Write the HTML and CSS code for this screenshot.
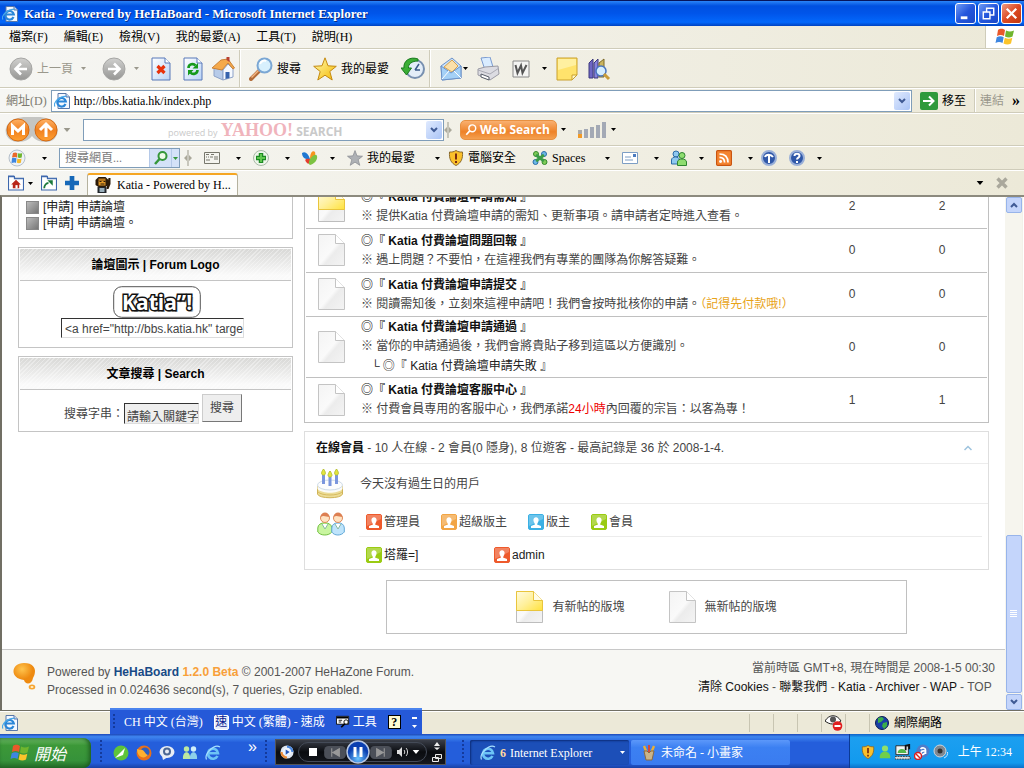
FILE: index.html
```
<!DOCTYPE html>
<html lang="zh-Hant">
<head>
<meta charset="utf-8">
<title>Katia - Powered by HeHaBoard</title>
<link rel="stylesheet" href="styles.css">
</head>
<body>
<svg class="defs" aria-hidden="true">
  <defs>
    <linearGradient id="gGrey" x2="0" y2="1"><stop offset="0" stop-color="#d0d0ce"/><stop offset="1" stop-color="#969694"/></linearGradient>
    <linearGradient id="gOrange" x2="0" y2="1"><stop offset="0" stop-color="#ffb367"/><stop offset=".5" stop-color="#f08020"/><stop offset="1" stop-color="#ffa030"/></linearGradient>
    <linearGradient id="gPage" x2="1" y2="1"><stop offset="0" stop-color="#fff"/><stop offset="1" stop-color="#b9d3f6"/></linearGradient>
    <linearGradient id="gStar" x2="1" y2="1"><stop offset="0" stop-color="#fffbb0"/><stop offset="1" stop-color="#f5b800"/></linearGradient>
    <linearGradient id="gDoc" x2="1" y2="1"><stop offset="0" stop-color="#f4f4f4"/><stop offset=".5" stop-color="#fafafa"/><stop offset=".6" stop-color="#ececec"/><stop offset="1" stop-color="#f4f4f4"/></linearGradient>
    <linearGradient id="gNew" x2="1" y2="1"><stop offset="0" stop-color="#fffbe0"/><stop offset=".5" stop-color="#fff09a"/><stop offset="1" stop-color="#ffe23c"/></linearGradient>
    <radialGradient id="gBlob" cx=".4" cy=".3"><stop offset="0" stop-color="#ffc44d"/><stop offset="1" stop-color="#ee8a10"/></radialGradient>
    <radialGradient id="gPlay" cx=".5" cy=".8"><stop offset="0" stop-color="#6cc6ff"/><stop offset="1" stop-color="#0b3fb0"/></radialGradient>
  </defs>
  <symbol id="arrow" viewBox="0 0 5 3"><path d="M0 0h5L2.500 3z" fill="currentColor"/></symbol>
  <symbol id="ie" viewBox="0 0 16 16"><path d="M4 .5h8l3.500 3.500v11.500H4z" fill="#f4f8ff" stroke="#5877a8"/><path d="M12 .5V4h3.500" fill="#c8d8f2" stroke="#5877a8"/><path d="M11.500 11A4.300 4.300 0 1 1 11.800 8.500H3.500" fill="none" stroke="#2a86d8" stroke-width="2.200"/><path d="M1 13.500C-1.500 10 6 2.500 12.500 3.500" fill="none" stroke="#49a8e8" stroke-width="1.200"/></symbol>
  <symbol id="ieBig" viewBox="0 0 16 16"><path d="M12.500 11A5 5 0 1 1 13 8.300H4" fill="none" stroke="#6cc4f6" stroke-width="2.600"/><path d="M1.500 14.500C-1 9 9-1.500 15 2" fill="none" stroke="#a8e0ff" stroke-width="1.200"/></symbol>
  <symbol id="flag" viewBox="0 0 20 18"><path d="M3 2c3-2 5-1 7 0L9 8C7 7 5 6.500 2 8z" fill="#e9582a"/><path d="M11 2.500c3 1.500 5 1.300 8 0L17.500 8.500c-3 1.500-5 1-7.500 0z" fill="#6fb52e"/><path d="M1.700 9.200c3-1.600 5-1 7 0L7.500 15c-2-1-4-1.500-7 0z" fill="#3e86e0"/><path d="M9.800 9.700c3 1.300 5 1.300 7.500 0L16 15.500c-3 1.500-5 1-7.500 0z" fill="#fbc42b"/></symbol>
  <symbol id="back" viewBox="0 0 24 24"><circle cx="12" cy="12" r="11" fill="url(#gGrey)" stroke="#a6a6a4"/><path d="M18 12H7M12 6.500L6.500 12l5.500 5.500" fill="none" stroke="#fff" stroke-width="2.600"/></symbol>
  <symbol id="fwd" viewBox="0 0 24 24"><circle cx="12" cy="12" r="11" fill="url(#gGrey)" stroke="#a6a6a4"/><path d="M6 12h11M12 6.500l5.500 5.500-5.500 5.500" fill="none" stroke="#fff" stroke-width="2.600"/></symbol>
  <symbol id="stop" viewBox="0 0 20 24"><path d="M1 1h13l5 5v17H1z" fill="url(#gPage)" stroke="#5878b8"/><path d="M14 1v5h5" fill="#fff" stroke="#5878b8"/><path d="M6.500 9l7 7M13.500 9l-7 7" stroke="#e8320c" stroke-width="3.200"/></symbol>
  <symbol id="refresh" viewBox="0 0 20 24"><path d="M1 1h13l5 5v17H1z" fill="url(#gPage)" stroke="#5878b8"/><path d="M14 1v5h5" fill="#fff" stroke="#5878b8"/><path d="M5.500 11c0-4 5-5 7-2.500M14.500 13c0 4-5 5-7 2.500" fill="none" stroke="#159a1c" stroke-width="2.600"/><path d="M15 6v5.500H9.500zM5 18.500V13h5.500z" fill="#159a1c"/></symbol>
  <symbol id="home" viewBox="0 0 24 24"><path d="M3 11v8l9 4V13z" fill="#b7cbe9" stroke="#8da2c8"/><path d="M12 13l5-6 5 5v8l-10 3z" fill="#f5f9ff" stroke="#8da2c8"/><path d="M1 11L10 3l7-1 6.500 9-1.500 1-5-6-6 7z" fill="#f5a94a" stroke="#c98238"/><path d="M14.500 15h4v6l-4 1z" fill="#3763ad"/><path d="M15.500 0h3v5l-3-2z" fill="#b84032"/></symbol>
  <symbol id="lens" viewBox="0 0 24 24"><path d="M10 14L2 22" stroke="#b36c39" stroke-width="4" stroke-linecap="round"/><path d="M9.500 13.500l-7 7" stroke="#f3b684" stroke-width="1.500"/><circle cx="15.500" cy="8.500" r="7" fill="#d8f0fd" stroke="#7ba7d4" stroke-width="2"/><path d="M11 7c1-3 4-4 6-3" fill="none" stroke="#fff" stroke-width="2"/></symbol>
  <symbol id="star" viewBox="0 0 24 24"><path d="M12 .8l3 8 8.300.5-6.500 5.200 2.400 8.500L12 18.200 4.800 23l2.400-8.500L.7 9.300 9 8.800z" fill="url(#gStar)" stroke="#c48a10"/></symbol>
  <symbol id="history" viewBox="0 0 24 24"><circle cx="14" cy="12" r="9" fill="#e3edf8" stroke="#7890b0" stroke-width="2"/><path d="M14 13l4-6M14 13h5" stroke="#385888" stroke-width="1.500"/><path d="M17 2C9-1 2 4 3 11H0l5.500 7 5-7H7.500C7 7 11 4 17 4z" fill="#3bae35" stroke="#1b7a20"/></symbol>
  <symbol id="mail" viewBox="0 0 24 24"><path d="M2 9L13 1l9 8v12L3 23z" fill="#c9e2fb" stroke="#6c92c8"/><path d="M5 10l8-7 6 6-6 6z" fill="#fbe0a9" stroke="#d5a24d"/><path d="M2 9l10 7 10-7v12L3 23z" fill="#a4d0f6" stroke="#6c92c8"/><path d="M3 22l7-8M22 21l-7-7" stroke="#fff"/></symbol>
  <symbol id="printer" viewBox="0 0 24 24"><path d="M5 1l9-1 3 10-8 3z" fill="#d9ecff" stroke="#7b9bd0"/><path d="M2 12l7-2 13-1 1 8-9 6L2 18z" fill="#dcdce2" stroke="#9a9aa4"/><path d="M2 13l12 4 9-6" fill="none" stroke="#aaaab4"/><path d="M5 17l8 3v3l-8-3z" fill="#fff" stroke="#555b67"/></symbol>
  <symbol id="word" viewBox="0 0 18 18"><path d="M1 1h16v16H1z" fill="#f4f4f2" stroke="#888"/><path d="M3.500 5l2 8L9 5.500 10.500 13 14.500 5" fill="none" stroke="#555" stroke-width="2"/></symbol>
  <symbol id="note" viewBox="0 0 22 24"><path d="M1 1h20v17l-5 5H1z" fill="#ffe36c" stroke="#c9a02c"/><path d="M2 2h18v6L2 13z" fill="#fff0a0"/><path d="M16 23v-5h5z" fill="#fff8cc" stroke="#c9a02c"/></symbol>
  <symbol id="books" viewBox="0 0 22 24"><path d="M1 6l4-4v19H1z" fill="#6e66c4" stroke="#3d387d"/><path d="M6 6l4-4v19H6z" fill="#8884de" stroke="#3d387d"/><path d="M11 6l5-4v18h-5z" fill="#cbb55e" stroke="#7a6828"/><circle cx="13" cy="14" r="5" fill="#d4edff" stroke="#4875c0" stroke-width="1.500"/><path d="M16 17l5 5" stroke="#c99b38" stroke-width="3"/></symbol>
  <symbol id="chev" viewBox="0 0 8 6"><path d="M1 1l3 3 3-3" fill="none" stroke="#3f5a94" stroke-width="2"/></symbol>
  <symbol id="go" viewBox="0 0 18 18"><rect width="18" height="18" rx="2" fill="#2f9a3b"/><path d="M3 9h10M9 4.500L13.500 9 9 13.500" fill="none" stroke="#fff" stroke-width="2"/></symbol>
  <symbol id="mws" viewBox="0 0 54 26"><path d="M13 1c8-2 20-2 28 0 16 3 15 24 0 24-7 0-12-3-14-6-2 3-7 6-14 6C-3 25-4 4 13 1z" fill="#c5c5c2"/><circle cx="13" cy="13" r="11" fill="url(#gOrange)" stroke="#d56a12"/><circle cx="41" cy="13" r="11" fill="url(#gOrange)" stroke="#d56a12"/><path d="M7.500 18V9L13 14l5.500-5v9" fill="none" stroke="#fff" stroke-width="3"/><path d="M41 20V8M35 13l6-6 6 6" fill="none" stroke="#fff" stroke-width="3"/></symbol>
  <symbol id="split" viewBox="0 0 8 16"><path d="M4 0v16" stroke="#9b998b"/><path d="M0 8l3-3v6zM8 8L5 5v6z" fill="#aaa89a"/></symbol>
  <symbol id="bars" viewBox="0 0 29 16"><path d="M0 8h4v8H0z" fill="#aaa"/><path d="M0 12h4v4H0z" fill="#f39a26"/><path d="M6 7h4v9H6zM12 5h4v11h-4zM18 3h4v13h-4zM24 0h4v16h-4z" fill="#a3a9b5"/></symbol>
  <symbol id="orb" viewBox="0 0 18 18"><circle cx="9" cy="9" r="8" fill="#edf2f8" stroke="#b5bfca"/><path d="M5 4c2-1 3-.5 4 0v4.500c-2-1-3-.5-5 0z" fill="#e9682a"/><path d="M9.700 4c1.500 1 3.500.6 4.500 0l-.5 4.500c-1.500.7-2.500.5-4 0z" fill="#6fb52e"/><path d="M4 9.300c2-.8 3-.3 4.500 0L8 14c-1.500-.7-2.500-.6-4.500 0z" fill="#3e86e0"/><path d="M9.300 9.500c1.500.8 2.800.6 4.200 0l-.6 4.300c-1.500.7-2.800.5-4 0z" fill="#f4b92b"/></symbol>
  <symbol id="glens" viewBox="0 0 14 14"><circle cx="8.500" cy="5" r="4" fill="#eefbe8" stroke="#35973a" stroke-width="2"/><path d="M5.500 8L1 13" stroke="#35973a" stroke-width="2.500"/></symbol>
  <symbol id="card" viewBox="0 0 16 12"><path d="M.5.500h15v11H.5z" fill="#f4f4ef" stroke="#77776c"/><path d="M2 2.500h3M7 2.500h3M2 5h1M4 5h1M6 5h3M2 8h4M11 4v4M13 4v4" stroke="#77776c"/></symbol>
  <symbol id="plusG" viewBox="0 0 16 16"><circle cx="8" cy="8" r="7.500" fill="#eef5ea" stroke="#a9b8a6"/><path d="M8 3v10M3 8h10" stroke="#1d8a24" stroke-width="4.500"/><path d="M8 4v8M4 8h8" stroke="#60c84e" stroke-width="2"/></symbol>
  <symbol id="butterfly" viewBox="0 0 16 14"><path d="M8 8C6 2 3 0 0 2c0 4 3 7 8 6z" fill="#1e78d2"/><path d="M8 8C8 1 11-1 13 1c1 3-1 6-5 7z" fill="#f7941d"/><path d="M8 8c-5-1-6 1-3 4 2 2 4-1 3-4z" fill="#e53c2e"/><path d="M8 8c2-3 6-6 7-3 1 4-3 8-7 9-2-1-1-4 0-6z" fill="#7cc242"/></symbol>
  <symbol id="starG" viewBox="0 0 24 24"><path d="M12 .8l3 8 8.300.5-6.500 5.200 2.400 8.500L12 18.200 4.800 23l2.400-8.500L.7 9.300 9 8.800z" fill="#aeb1b5" stroke="#84878c"/></symbol>
  <symbol id="shield" viewBox="0 0 14 16"><path d="M7 .5c2 1.300 4 1.700 6.500 1.500C14 9 12 13 7 15.500 2 13 0 9 .5 2 3 2.200 5 1.800 7 .5z" fill="#fbc02a" stroke="#8a6a2c"/><path d="M7 3.500v6M7 11v2" stroke="#7a2c10" stroke-width="2"/></symbol>
  <symbol id="spaces" viewBox="0 0 16 14"><circle cx="4" cy="3" r="2.500" fill="#7fcb58" stroke="#348a2c"/><circle cx="12" cy="3" r="2.500" fill="#6cb8e8" stroke="#2c6da8"/><circle cx="3.500" cy="11" r="2.500" fill="#6cb8e8" stroke="#2c6da8"/><circle cx="12.500" cy="11" r="2.500" fill="#7fcb58" stroke="#348a2c"/><path d="M4 4l8 6M12 4l-8 6" stroke="#3b9c48" stroke-width="3"/></symbol>
  <symbol id="letter" viewBox="0 0 16 12"><path d="M.5.500h15v11H.5z" fill="#fff" stroke="#7d9ec4"/><path d="M3 5h6M3 8h8" stroke="#7d9ec4"/><path d="M11 2h3v3h-3z" fill="#4b7cc0"/></symbol>
  <symbol id="people" viewBox="0 0 16 16"><circle cx="5" cy="4" r="3" fill="#8fc8f0" stroke="#2c6ca8"/><path d="M.5 14V10c0-4 8-4 8 0v4z" fill="#8fc8f0" stroke="#2c6ca8"/><circle cx="11" cy="5.500" r="3" fill="#8fdd70" stroke="#2f8430"/><path d="M6.500 15.500V12c0-4 9-4 9 0v3.500z" fill="#8fdd70" stroke="#2f8430"/></symbol>
  <symbol id="rss" viewBox="0 0 14 14"><rect x=".5" y=".5" width="13" height="13" rx="1" fill="#f48430" stroke="#c95410"/><circle cx="4" cy="10" r="1.300" fill="#fff"/><path d="M3 6.500c3 0 4.500 2 4.500 4.500M3 3.500c5 0 7.500 3 7.500 7.500" fill="none" stroke="#fff" stroke-width="1.500"/></symbol>
  <symbol id="tool" viewBox="0 0 16 16"><circle cx="8" cy="8" r="7" fill="#3058a8" stroke="#9ab0d8" stroke-width="2"/><path d="M4 7c1-3 6-3 8 0M8 5v8" stroke="#fff" stroke-width="2" fill="none"/></symbol>
  <symbol id="help" viewBox="0 0 16 16"><circle cx="8" cy="8" r="7" fill="#3058a8" stroke="#9ab0d8" stroke-width="2"/><path d="M5.500 6c0-3 5-3 5 0 0 1.500-2.500 1.700-2.500 3.500M8 11v2" stroke="#fff" stroke-width="2" fill="none"/></symbol>
  <symbol id="folderHome" viewBox="0 0 15 14"><path d="M.5.500h5l1 2h8v11H.5z" fill="#fff" stroke="#3d67ad"/><path d="M1 1h5v2h8" fill="none" stroke="#3d67ad"/><path d="M7.500 4L3 8.500h1.500V12h6V8.500H12z" fill="#b8261a"/><path d="M7 9h2v3H7z" fill="#fff"/></symbol>
  <symbol id="folderGo" viewBox="0 0 15 14"><path d="M.5.500h5l1 2h8v11H.5z" fill="#fff" stroke="#3d67ad"/><path d="M1 1h5v2h8" fill="none" stroke="#3d67ad"/><path d="M3 12c0-3 2-5 4-5" fill="none" stroke="#1c7a3c" stroke-width="1.700"/><path d="M6 4.500h5v5z" fill="#1c7a3c"/></symbol>
  <symbol id="plusB" viewBox="0 0 12 12"><path d="M4 0h4v4h4v4H8v4H4V8H0V4h4z" fill="#1668b8"/></symbol>
  <symbol id="lion" viewBox="0 0 15 16"><path d="M3 0h7l3 3v5l-3 2H3L0 8V3z" fill="#2a1a08"/><path d="M3 1.500h7v2H3z" fill="#b87820"/><path d="M3 3.500h7v5H3z" fill="#e39a28"/><path d="M4 4h2v1H4zM8 4h2v1H8zM5 6.500h4v1H5z" fill="#2a1a08"/><path d="M2 10h9v6H2z" fill="#22262c"/><path d="M4 11h5v4H4z" fill="#9ab0bc"/><path d="M13 1h2v6l-2 5h-2z" fill="#2a1a08"/></symbol>
  <symbol id="docOff" viewBox="0 0 27 32"><path d="M.5.500h17l9 9v22H.5z" fill="url(#gDoc)" stroke="#c4c4c4"/><path d="M17.500.5v9h9" fill="#fff" stroke="#c4c4c4"/></symbol>
  <symbol id="docOn" viewBox="0 0 27 32"><path d="M.5.500h17l9 9v22H.5z" fill="url(#gDoc)" stroke="#bdbdbd"/><path d="M.5.500h17l9 9v10H.5z" fill="url(#gNew)" stroke="#e9c53c"/><path d="M17.500.5v9h9" fill="#fffce8" stroke="#e9c53c"/></symbol>
  <symbol id="cake" viewBox="0 0 26 30"><path d="M.5 17v8c1 5 24 5 25 0v-8z" fill="#ecdc96" stroke="#d0b458"/><path d="M.5 17v3c5 5 20 5 25 0v-3z" fill="#fbfbf8"/><ellipse cx="13" cy="16" rx="12.500" ry="5" fill="#fdfdfd" stroke="#cfdce8"/><path d="M1 23c4 4 20 4 24 0" fill="none" stroke="#d8bc60"/><path d="M5 6h3v9H5zM11.500 8h3v9h-3zM18 6h3v9h-3z" fill="#7b96dd"/><path d="M6.500 0c3 4 2 6 0 6s-3-2 0-6zM13 2c3 4 2 6 0 6s-3-2 0-6zM19.500 0c3 4 2 6 0 6s-3-2 0-6z" fill="#e4e63c" stroke="#b4be30"/></symbol>
  <symbol id="members" viewBox="0 0 28 24"><path d="M.8 20V16c0-7 14-7 14 0v4c-3 4-11 4-14 0z" fill="#c9f5a0" stroke="#72c040"/><path d="M14.800 20v-4c0-7 12.500-7 12.500 0v4c-3 4-10 4-12.500 0z" fill="#bfe4fb" stroke="#62a8d8"/><path d="M5 12l3 5 3-5M18 12l3 5 3-5" fill="#fff" stroke="#88b8a0"/><circle cx="8" cy="6" r="4.500" fill="#ffe3c2" stroke="#e08a5a"/><circle cx="21" cy="6" r="4.500" fill="#ffe3c2" stroke="#e08a5a"/><path d="M3.500 5C4-1 12-1 12.500 5 9 5 7 3 3.500 5zM16.500 5C17-1 25-1 25.500 5 22 5 20 3 16.500 5z" fill="#dd7f52"/></symbol>
  <symbol id="badge" viewBox="0 0 16 16"><rect x=".5" y=".5" width="15" height="15" rx="1.500" fill="currentColor" stroke="currentColor"/><path d="M1 1h14v4L1 12z" fill="#fff" opacity=".25"/><path d="M3 14v-2l4-1.500L5.500 7c-1-5 6-5 5 0L9 10.500l4 1.500v2z" fill="#fff"/></symbol>
  <symbol id="bubble" viewBox="0 0 23 27"><path d="M11 0C20 0 22 5 22 8s-1 5-2 7c-1 7-8 7-9 2C-4 15-2 0 11 0z" fill="url(#gBlob)"/><ellipse cx="19" cy="24" rx="3.300" ry="2.500" fill="#f7a530"/><ellipse cx="19" cy="24" rx="1.500" ry=".9" fill="#fff0cc"/></symbol>
  <symbol id="eye" viewBox="0 0 18 16"><path d="M0 6C4-1 12-1 16 6 10 10 5 10 0 6z" fill="#fff" stroke="#222"/><circle cx="8" cy="4.500" r="3" fill="#555"/><circle cx="12.500" cy="11" r="4.800" fill="#e02020"/><path d="M9.500 11h6" stroke="#fff" stroke-width="2"/></symbol>
  <symbol id="globe" viewBox="0 0 14 14"><circle cx="7" cy="7" r="6.500" fill="#1a3fa8" stroke="#0a1c50"/><path d="M3 2l4-1 2 2-3 3-3 1zM8 7l4-1v4l-3 3-2-3z" fill="#3bae4a"/></symbol>
  <symbol id="qGreen" viewBox="0 0 16 16"><circle cx="8" cy="8" r="7.500" fill="#5ec43a"/><path d="M2 13L12 3l-2 7z" fill="#fff"/></symbol>
  <symbol id="qFox" viewBox="0 0 16 16"><circle cx="8" cy="8" r="7.500" fill="#e8701a"/><circle cx="9" cy="7" r="4.500" fill="#2b5fc0"/><path d="M1 4l3 1c5-1 4 4 8 5-4 5-11 2-11-6z" fill="#ffb02e"/></symbol>
  <symbol id="qChat" viewBox="0 0 16 16"><ellipse cx="8" cy="7" rx="7.500" ry="6" fill="#e8edf5"/><path d="M3 11l1 4 5-3z" fill="#e8edf5"/><circle cx="8" cy="6.500" r="3" fill="none" stroke="#4b6794" stroke-width="2"/></symbol>
  <symbol id="qMsn" viewBox="0 0 16 16"><circle cx="4.500" cy="4" r="2.700" fill="#bde8a0"/><path d="M1 14c-1-9 8-9 7 0z" fill="#bde8a0"/><circle cx="11.500" cy="4" r="2.700" fill="#cfeefa"/><path d="M8 14c-1-9 8-9 7 0z" fill="#8ed0ea"/></symbol>
  <symbol id="wmp" viewBox="0 0 16 16"><circle cx="8" cy="8" r="7.500" fill="#dfe7f2"/><path d="M8 .5a7.500 7.500 0 0 1 7.500 7.500H8z" fill="#4a86dd"/><path d="M8 15.500A7.500 7.500 0 0 1 .5 8H8z" fill="#ee8d38"/><circle cx="8" cy="8" r="5" fill="#eef4ff"/><path d="M6.500 5l4.500 3-4.500 3z" fill="#2456b8"/></symbol>
  <symbol id="prev" viewBox="0 0 20 12"><rect width="20" height="12" rx="4" fill="#4b4f58"/><path d="M7 2v8M14 2.500v7L8 6z" fill="#999" stroke="#999"/></symbol>
  <symbol id="next" viewBox="0 0 20 12"><rect width="20" height="12" rx="4" fill="#4b4f58"/><path d="M13 2v8M6 2.500v7L12 6z" fill="#999" stroke="#999"/></symbol>
  <symbol id="pause" viewBox="0 0 24 24"><circle cx="12" cy="12" r="11" fill="url(#gPlay)" stroke="#b8c8e4" stroke-width="1.500"/><path d="M7.500 7h3v10h-3zM13.500 7h3v10h-3z" fill="#fff"/></symbol>
  <symbol id="vol" viewBox="0 0 12 10"><path d="M0 3h2l3-3v10L2 7H0z" fill="#ddd"/><path d="M7 3c1 1 1 3 0 4M9 1c2 2 2 6 0 8" fill="none" stroke="#ddd"/></symbol>
  <symbol id="winctl" viewBox="0 0 12 22"><path d="M6 1l3 4H3zM6 9L3 6.500h6z" fill="#eee"/><path d="M4.500 13.500h6v4h-6zM1.500 16.500h6v4h-6z" fill="#222" stroke="#eee"/></symbol>
  <symbol id="brushes" viewBox="0 0 14 16"><path d="M2 1l3 7M12 1L9 8" stroke="#e8b03a" stroke-width="2.400"/><path d="M7 0v8" stroke="#d44a3a" stroke-width="2"/><path d="M4 15L2 6h3l2 2 2-2h3l-2 9z" fill="#c9b48a" stroke="#8a6a40"/></symbol>
  <symbol id="buddy" viewBox="0 0 14 16"><circle cx="7" cy="4" r="3.500" fill="#8fe06a"/><path d="M1 15c-1-10 13-10 12 0z" fill="#6fcf4a"/></symbol>
  <symbol id="monitor" viewBox="0 0 18 16"><path d="M1 1h14v10H1z" fill="#f4f4f4" stroke="#222"/><path d="M3 9c0-6 9-6 10 0z" fill="#52b848"/><path d="M0 13h17v3H0z" fill="#ddd" stroke="#333" stroke-dasharray="2 1"/><path d="M12 6V1l4-1v5" fill="none" stroke="#111" stroke-width="2"/></symbol>
  <symbol id="avast" viewBox="0 0 16 16"><circle cx="9" cy="7" r="6.500" fill="#4f7cc8"/><path d="M6.500 5c2-2 5-1 5 1v4M11 7c-5-1-5 4-2 3.500l2-1.500" fill="none" stroke="#fff" stroke-width="1.700"/><circle cx="4" cy="12" r="3.500" fill="#fff" stroke="#d82020" stroke-width="1.500"/><path d="M2 10l4 4" stroke="#d82020" stroke-width="1.500"/></symbol>
  <symbol id="speaker" viewBox="0 0 16 16"><circle cx="7" cy="7" r="6" fill="#808890" stroke="#d0d4d8"/><circle cx="7" cy="7" r="2.500" fill="#333"/><path d="M11 14c3-1 4-4 3.500-6" fill="none" stroke="#cfe8ff"/></symbol>
  <symbol id="tools" viewBox="0 0 16 14"><path d="M.5.500h14v9H.5z" fill="#fff" stroke="#000"/><path d="M1 1h13v2H1z" fill="#000"/><path d="M3 5h4M3 7h3" stroke="#000"/><path d="M6 13l5-5" stroke="#000" stroke-width="2"/><circle cx="11.500" cy="7" r="2.500" fill="#fff" stroke="#000"/></symbol>
</svg>

<header class="titlebar">
  <svg class="i16"><use href="#ie"/></svg>
  <h1>Katia - Powered by HeHaBoard - Microsoft Internet Explorer</h1>
  <button class="win" aria-label="最小化"><svg viewBox="0 0 20 20"><path d="M5 13h7v3H5z" fill="#fff"/></svg></button>
  <button class="win" aria-label="還原"><svg viewBox="0 0 20 20"><path d="M8 8V4.500h7.500v7H12M4.500 8.500h7v7h-7z" fill="none" stroke="#fff" stroke-width="1.500"/></svg></button>
  <button class="win close" aria-label="關閉"><svg viewBox="0 0 20 20"><path d="M5 5l10 10M15 5L5 15" stroke="#fff" stroke-width="2.400"/></svg></button>
</header>

<nav class="menubar">
  <button>檔案(F)</button><button>編輯(E)</button><button>檢視(V)</button><button>我的最愛(A)</button><button>工具(T)</button><button>說明(H)</button>
  <span class="brand"><svg class="flag"><use href="#flag"/></svg></span>
</nav>

<div class="toolbar main-tools">
  <button class="off"><svg class="i24"><use href="#back"/></svg>上一頁</button>
  <svg class="arr off m8"><use href="#arrow"/></svg>
  <button class="m16" aria-label="下一頁"><svg class="i24"><use href="#fwd"/></svg></button>
  <svg class="arr off m8"><use href="#arrow"/></svg>
  <button class="m12" aria-label="停止"><svg class="page"><use href="#stop"/></svg></button>
  <button class="m12" aria-label="重新整理"><svg class="page"><use href="#refresh"/></svg></button>
  <button class="m8" aria-label="首頁"><svg class="i24"><use href="#home"/></svg></button>
  <i class="sep m4"></i>
  <button class="m8"><svg class="i24"><use href="#lens"/></svg>搜尋</button>
  <button class="m12"><svg class="i24"><use href="#star"/></svg>我的最愛</button>
  <button class="m12" aria-label="記錄"><svg class="i24"><use href="#history"/></svg></button>
  <i class="sep m4"></i>
  <button class="m8" aria-label="郵件"><svg class="i24"><use href="#mail"/></svg></button>
  <svg class="arr"><use href="#arrow"/></svg>
  <button class="m8" aria-label="列印"><svg class="i24"><use href="#printer"/></svg></button>
  <button class="m12" aria-label="編輯"><svg class="i18"><use href="#word"/></svg></button>
  <svg class="arr m12"><use href="#arrow"/></svg>
  <button class="m8" aria-label="便箋"><svg class="i24"><use href="#note"/></svg></button>
  <button class="m8" aria-label="參考資料"><svg class="i24"><use href="#books"/></svg></button>
</div>

<form class="toolbar address">
  <label for="url">網址(D)</label>
  <div class="combo grow">
    <svg class="i16"><use href="#ie"/></svg>
    <input id="url" type="text" value="http://bbs.katia.hk/index.php">
    <button type="button" class="drop" aria-label="展開"><svg><use href="#chev"/></svg></button>
  </div>
  <button type="button" class="m8"><svg class="i18"><use href="#go"/></svg>移至</button>
  <i class="sep m8"></i>
  <button type="button" class="off m4">連結</button>
  <span class="more m8">»</span>
</form>

<div class="toolbar websearch">
  <svg class="mws"><use href="#mws"/></svg>
  <svg class="arr big off m4"><use href="#arrow"/></svg>
  <div class="combo yahoo m12">
    <input type="text" aria-label="Yahoo! Search">
    <span class="mark"><small>powered by</small> <b>YAHOO!</b> <strong>SEARCH</strong></span>
    <button type="button" class="drop" aria-label="展開"><svg><use href="#chev"/></svg></button>
  </div>
  <svg class="split"><use href="#split"/></svg>
  <button class="orange m8"><svg viewBox="0 0 14 14"><circle cx="8.500" cy="5" r="4" fill="none" stroke="#fff" stroke-width="1.700"/><path d="M5.500 8L1.500 12.500" stroke="#fff" stroke-width="2"/></svg>Web Search</button>
  <svg class="arr m4"><use href="#arrow"/></svg>
  <svg class="bars m12"><use href="#bars"/></svg>
  <svg class="arr m4"><use href="#arrow"/></svg>
</div>

<div class="toolbar msn">
  <svg class="i18"><use href="#orb"/></svg>
  <svg class="arr m16"><use href="#arrow"/></svg>
  <div class="combo find m12">
    <input type="text" aria-label="搜尋網頁" placeholder="搜尋網頁...">
    <button class="green" aria-label="搜尋"><svg><use href="#glens"/></svg></button>
    <button class="green narrow" aria-label="選項"><svg class="arr"><use href="#arrow"/></svg></button>
  </div>
  <svg class="split m4"><use href="#split"/></svg>
  <svg class="i16 m12"><use href="#card"/></svg>
  <svg class="arr m16"><use href="#arrow"/></svg>
  <svg class="i16 m12"><use href="#plusG"/></svg>
  <svg class="arr m16"><use href="#arrow"/></svg>
  <svg class="i16 m12"><use href="#butterfly"/></svg>
  <svg class="arr m12"><use href="#arrow"/></svg>
  <button class="m12"><svg class="i16"><use href="#starG"/></svg>我的最愛</button>
  <svg class="arr m20"><use href="#arrow"/></svg>
  <button class="m8"><svg class="i16"><use href="#shield"/></svg>電腦安全</button>
  <button class="m16"><svg class="i16"><use href="#spaces"/></svg>Spaces</button>
  <svg class="arr m20"><use href="#arrow"/></svg>
  <svg class="i16 m12"><use href="#letter"/></svg>
  <svg class="arr m16"><use href="#arrow"/></svg>
  <svg class="i16 m12"><use href="#people"/></svg>
  <svg class="arr m12"><use href="#arrow"/></svg>
  <svg class="i16 m12"><use href="#rss"/></svg>
  <svg class="arr m16"><use href="#arrow"/></svg>
  <svg class="i16 m8"><use href="#tool"/></svg>
  <svg class="i16 m12"><use href="#help"/></svg>
  <svg class="arr m12"><use href="#arrow"/></svg>
</div>

<div class="toolbar tabs">
  <svg class="i16"><use href="#folderHome"/></svg>
  <svg class="arr m4"><use href="#arrow"/></svg>
  <svg class="i16 m8"><use href="#folderGo"/></svg>
  <svg class="i14 m8"><use href="#plusB"/></svg>
  <button class="tab m8"><svg class="i16"><use href="#lion"/></svg>Katia - Powered by H...</button>
  <span class="grow"></span>
  <svg class="arr big"><use href="#arrow"/></svg>
  <svg class="i12 m12" viewBox="0 0 12 12"><path d="M1.500 1.500l9 9M10.500 1.500l-9 9" stroke="#aaa89c" stroke-width="3.400"/></svg>
</div>

<div class="view">
  <div class="doc">
    <main class="columns">
      <aside>
        <section class="card latest">
          <ul>
            <li><a href="#a">[申請] 申請論壇</a></li>
            <li><a href="#b">[申請] 申請論壇。</a></li>
          </ul>
        </section>
        <section class="card">
          <h2>論壇圖示 | Forum Logo</h2>
          <div class="logo-body">
            <svg class="logo" viewBox="0 0 88 32" role="img" aria-label="Katia">
              <rect x=".7" y=".7" width="86.600" height="30.600" rx="8" fill="#fff" stroke="#555"/>
              <text x="11" y="26" class="logo-shadow">Katia”!</text>
              <text x="9" y="24" class="logo-text">Katia”!</text>
            </svg>
            <input class="code" type="text" aria-label="Forum Logo" value="&lt;a href=&quot;http://bbs.katia.hk&quot; target=&quot;_blank&quot;&gt;">
          </div>
        </section>
        <section class="card">
          <h2>文章搜尋 | Search</h2>
          <form class="search-body">
            <label for="q">搜尋字串：</label><input id="q" type="text" value="請輸入關鍵字"><button type="button">搜尋</button>
          </form>
        </section>
      </aside>
      <div class="right">
        <table class="forums">
          <tbody>
            <tr><td class="ico"><svg><use href="#docOn"/></svg></td><td><a href="#1">◎『 Katia 付費論壇申請需知 』</a><p>※ 提供Katia 付費論壇申請的需知、更新事項。請申請者定時進入查看。</p></td><td class="num">2</td><td class="num">2</td></tr>
            <tr><td class="ico"><svg><use href="#docOff"/></svg></td><td><a href="#2">◎『 Katia 付費論壇問題回報 』</a><p>※ 遇上問題？不要怕，在這裡我們有專業的團隊為你解答疑難。</p></td><td class="num">0</td><td class="num">0</td></tr>
            <tr><td class="ico"><svg><use href="#docOff"/></svg></td><td><a href="#3">◎『 Katia 付費論壇申請提交 』</a><p>※ 閱讀需知後，立刻來這裡申請吧！我們會按時批核你的申請。<em>（記得先付款哦!）</em></p></td><td class="num">0</td><td class="num">0</td></tr>
            <tr><td class="ico"><svg><use href="#docOff"/></svg></td><td><a href="#4">◎『 Katia 付費論壇申請通過 』</a><p>※ 當你的申請通過後，我們會將貴貼子移到這區以方便識別。</p><p class="sub">└ ◎『 Katia 付費論壇申請失敗 』</p></td><td class="num">0</td><td class="num">0</td></tr>
            <tr><td class="ico"><svg><use href="#docOff"/></svg></td><td><a href="#5">◎『 Katia 付費論壇客服中心 』</a><p>※ 付費會員専用的客服中心，我們承諾<span class="red">24小時</span>內回覆的宗旨：以客為專！</p></td><td class="num">1</td><td class="num">1</td></tr>
          </tbody>
        </table>
        <section class="online">
          <header><p><strong>在線會員</strong> - 10 人在線 - 2 會員(0 隱身), 8 位遊客 - 最高記錄是 36 於 2008-1-4.</p><svg viewBox="0 0 8 6"><path d="M.5 5L4 1.500 7.500 5" fill="none" stroke="#9dc3de" stroke-width="1.500"/></svg></header>
          <div class="row birthday"><svg class="cake"><use href="#cake"/></svg><p>今天沒有過生日的用戶</p></div>
          <div class="row who">
            <svg class="members"><use href="#members"/></svg>
            <div class="lists">
              <ul class="roles">
                <li><svg class="c-red"><use href="#badge"/></svg>管理員</li>
                <li><svg class="c-orange"><use href="#badge"/></svg>超級版主</li>
                <li><svg class="c-blue"><use href="#badge"/></svg>版主</li>
                <li><svg class="c-green"><use href="#badge"/></svg>會員</li>
              </ul>
              <ul class="users">
                <li><svg class="c-green"><use href="#badge"/></svg><a href="#u1">塔羅=]</a></li>
                <li><svg class="c-red"><use href="#badge"/></svg><a href="#u2">admin</a></li>
              </ul>
            </div>
          </div>
        </section>
        <div class="legend">
          <span><svg><use href="#docOn"/></svg>有新帖的版塊</span>
          <span><svg><use href="#docOff"/></svg>無新帖的版塊</span>
        </div>
      </div>
    </main>
    <footer class="foot">
      <svg class="bubble"><use href="#bubble"/></svg>
      <div class="powered">
        <p>Powered by <b class="navy">HeHaBoard</b> <b class="amber">1.2.0 Beta</b> © 2001-2007 HeHaZone Forum.</p>
        <p>Processed in 0.024636 second(s), 7 queries, Gzip enabled.</p>
      </div>
      <div class="links">
        <p>當前時區 GMT+8, 現在時間是 2008-1-5 00:30</p>
        <p><a href="#c">清除 Cookies</a> - <a href="#d">聯繫我們</a> - <a href="#e">Katia</a> - <a href="#f">Archiver</a> - <a href="#g">WAP</a> - TOP&nbsp;</p>
      </div>
    </footer>
  </div>
  <div class="scroll" aria-hidden="true">
    <span class="sb up"><svg><use href="#chev"/></svg></span>
    <span class="space"></span>
    <span class="thumb"><svg viewBox="0 0 8 8"><path d="M0 .5h7M0 2.500h7M0 4.500h7M0 6.500h7" stroke="#fff"/></svg></span>
    <span class="sb"><svg><use href="#chev"/></svg></span>
  </div>
</div>

<div class="status">
  <svg class="i16"><use href="#ie"/></svg>
  <span class="grow"></span>
  <span class="cell"></span><span class="cell"></span><span class="cell"></span>
  <span class="cell"><svg class="i18"><use href="#eye"/></svg></span>
  <span class="cell"></span>
  <span class="cell zone"><svg class="i14"><use href="#globe"/></svg>網際網路</span>
  <div class="langbar">
    <i class="grip"></i>
    <button>CH 中文 (台灣)</button>
    <button><span class="ime">速</span>中文 (繁體) - 速成</button>
    <button><svg class="i14"><use href="#tools"/></svg>工具</button>
    <button class="q">?</button>
    <span class="lend"><i></i><svg class="arr"><use href="#arrow"/></svg></span>
  </div>
</div>

<div class="taskbar">
  <button class="start"><svg class="flag"><use href="#flag"/></svg>開始</button>
  <i class="grip"></i>
  <div class="quick">
    <svg class="i16"><use href="#qGreen"/></svg><svg class="i16"><use href="#qFox"/></svg><svg class="i16"><use href="#qChat"/></svg><svg class="i16"><use href="#qMsn"/></svg><svg class="i16"><use href="#ieBig"/></svg>
    <span>»</span>
  </div>
  <i class="grip"></i>
  <div class="player">
    <svg class="i14"><use href="#wmp"/></svg>
    <div class="ctl"><i></i><svg class="pn"><use href="#prev"/></svg><svg class="i24"><use href="#pause"/></svg><svg class="pn"><use href="#next"/></svg><svg class="i12"><use href="#vol"/></svg><svg class="arr big"><use href="#arrow"/></svg></div>
    <svg class="wc"><use href="#winctl"/></svg>
  </div>
  <i class="grip"></i>
  <button class="task active"><svg class="i16"><use href="#ieBig"/></svg><b>6</b><span>Internet Explorer</span><svg class="arr"><use href="#arrow"/></svg></button>
  <button class="task"><svg class="i16"><use href="#brushes"/></svg><span>未命名 - 小畫家</span></button>
  <div class="tray">
    <svg class="i14"><use href="#shield"/></svg><svg class="i14"><use href="#buddy"/></svg><svg class="i16"><use href="#monitor"/></svg><svg class="i16"><use href="#avast"/></svg><svg class="i16"><use href="#speaker"/></svg>
    <time>上午 12:34</time>
  </div>
</div>
</body>
</html>
```

FILE: styles.css
```
* { box-sizing: border-box; }
body {
  margin: 0;
  height: 100vh;
  display: flex;
  flex-direction: column;
  overflow: hidden;
  background: #ece9d8;
  color: #000;
  font: 12px/16px "Liberation Serif", "Noto Sans CJK TC", serif;
}
button, input { font: inherit; color: inherit; }
button { display: flex; align-items: center; gap: 4px; padding: 0; border: 0; background: none; white-space: nowrap; }
input { min-width: 0; padding: 0; border: 0; background: none; outline: 0; }
h1, h2, p, ul { margin: 0; padding: 0; list-style: none; }
a { color: inherit; text-decoration: none; }
svg { flex: none; display: block; }
.defs { position: absolute; width: 0; height: 0; }
.grow { flex: 1; }

.i12 { width: 12px; height: 12px; }
.i14 { width: 14px; height: 14px; }
.i16 { width: 16px; height: 16px; }
.i18 { width: 18px; height: 18px; }
.i24 { width: 24px; height: 24px; }
.page { width: 20px; height: 24px; }
.flag { width: 20px; height: 18px; }
.arr { width: 5px; height: 3px; }
.arr.big { width: 8px; height: 4px; }
.split { width: 8px; height: 16px; }
.off { color: #9a988c; }
.m4 { margin-left: 4px; }
.m8 { margin-left: 8px; }
.m12 { margin-left: 12px; }
.m16 { margin-left: 16px; }
.m20 { margin-left: 20px; }

/* window frame */
.titlebar {
  flex: none;
  display: flex;
  align-items: center;
  gap: 2px;
  height: 26px;
  padding: 0 2px;
  border-top: 1px solid #06145c;
  background: linear-gradient(#2a84f8, #0050e0 20%, #0055ea 50%, #0368fb 85%, #0042c0);
}
.titlebar h1 {
  flex: 1;
  padding-left: 4px;
  color: #fff;
  font-size: 13px;
  font-weight: bold;
  text-shadow: 1px 1px #0a2a80;
}
.win {
  width: 21px;
  height: 21px;
  border: 1px solid #fff;
  border-radius: 3px;
  background: linear-gradient(135deg, #6f9bf5, #2456dc 50%, #1b49c8);
}
.win svg { width: 19px; height: 19px; }
.win.close { background: linear-gradient(135deg, #f09a80, #dd4a24 50%, #c03810); }

.menubar {
  flex: none;
  display: flex;
  align-items: center;
  gap: 16px;
  height: 23px;
  padding-left: 9px;
  border-bottom: 1px solid #cfccba;
  background: linear-gradient(90deg, #f7f7f5, #ece9d8);
}
.brand {
  display: flex;
  align-items: center;
  justify-content: center;
  align-self: stretch;
  width: 39px;
  margin-left: auto;
  border-left: 1px solid #cfccba;
  background: #fff;
}

.toolbar {
  flex: none;
  display: flex;
  align-items: center;
  border-top: 1px solid #fff;
  border-bottom: 1px solid #cfccba;
  background: linear-gradient(90deg, #f6f6f3, #ece9d8);
}
.sep { width: 2px; align-self: stretch; border-left: 1px solid #cfccba; border-right: 1px solid #fff; }
.main-tools { height: 39px; padding-left: 9px; }

.address { height: 25px; padding: 0 4px 0 6px; }
.address label { color: #7d7b70; }
.combo { display: flex; align-items: center; border: 1px solid #7f9db9; background: #fff; }
.address .combo { height: 22px; margin-left: 4px; padding-left: 2px; gap: 4px; }
.combo input { flex: 1; }
.drop {
  justify-content: center;
  width: 16px;
  height: 18px;
  margin: 1px;
  border-radius: 2px;
  background: linear-gradient(135deg, #e0eafe, #aac4f6);
}
.drop svg { width: 8px; height: 6px; }
.more { font-weight: bold; font-size: 16px; }

.websearch { height: 33px; padding-left: 5px; }
.mws { width: 54px; height: 26px; }
.yahoo { position: relative; width: 361px; height: 22px; }
.mark {
  position: absolute;
  left: 84px;
  top: 0;
  line-height: 20px;
  color: #c9c9c9;
  font-family: "Open Sans", sans-serif;
  white-space: nowrap;
  pointer-events: none;
}
.mark small { font-size: 9px; }
.mark b { color: #f0b4bc; font: bold 18px/20px "Liberation Serif", serif; }
.mark strong { font-size: 12px; }
.orange {
  height: 20px;
  padding: 0 6px 0 4px;
  gap: 3px;
  border: 1px solid #e89040;
  border-radius: 5px;
  background: linear-gradient(#f9b070, #ee8228 60%, #f4a050);
  color: #fff;
  font: bold 12px "Open Sans", sans-serif;
}
.orange svg { width: 12px; height: 12px; }
.bars { width: 29px; height: 16px; }

.msn { height: 24px; padding-left: 8px; }
.find { width: 121px; height: 20px; }
.find input { padding-left: 5px; }
.find input::placeholder { color: #7b7b7b; opacity: 1; }
.green { justify-content: center; width: 22px; height: 18px; border-left: 1px solid #b5c9e8; background: #d4e2f8; color: #35973a; }
.green svg:not(.arr) { width: 14px; height: 14px; }
.green.narrow { width: 8px; }

.tabs { height: 25px; padding: 0 16px 0 8px; border-bottom: 0; }
.tab {
  align-self: flex-end;
  width: 151px;
  height: 22px;
  padding-left: 7px;
  gap: 6px;
  border: 1px solid #b5b29f;
  border-top: 2px solid #f5a623;
  border-bottom: 0;
  border-radius: 3px 3px 0 0;
  background: #fdfdfb;
}

/* page */
.view {
  flex: 1;
  min-height: 0;
  display: flex;
  border: solid #716f64;
  border-width: 2px 0 1px 2px;
  border-top-color: #8c8a7e;
  background: #fff;
  font-family: "Liberation Sans", "Noto Sans CJK TC", sans-serif;
  color: #444;
}
.doc { flex: 1; min-width: 0; display: flex; flex-direction: column; overflow: hidden; }
.columns { flex: 1; min-height: 0; display: flex; gap: 11px; padding: 0 16px; }
aside { width: 275px; flex: none; }
.card { margin-bottom: 8px; padding: 1px; border: 1px solid #c4c4c4; }
.latest { height: 42px; border-top: 0; padding: 2px 7px; color: #222; }
.latest li { display: flex; align-items: center; gap: 4px; }
.latest li::before { content: ""; width: 11px; height: 11px; background: linear-gradient(135deg, #bbb, #777); border: 1px solid #888; }
.card h2 {
  height: 32px;
  border-bottom: 1px solid #c4c4c4;
  background:
    repeating-linear-gradient(135deg, rgba(255, 255, 255, .35) 0 1px, transparent 1px 3px),
    linear-gradient(#d8d8d6, #fafafa 85%);
  color: #000;
  font-size: 12px;
  line-height: 32px;
  text-align: center;
}
.logo-body { display: flex; flex-direction: column; align-items: center; padding: 5px 6px 8px 0; }
.logo { width: 88px; height: 32px; margin-left: 8px; }
.logo text { font: bold 21px "Open Sans", sans-serif; }
.logo-shadow { fill: #aaa; }
.logo-text { fill: #fff; stroke: #111; stroke-width: 3px; paint-order: stroke; }
.code { width: 183px; height: 20px; padding: 2px 0 0 3px; border: 1px solid #ddd; border-top-color: #333; border-left-color: #333; }
.search-body { display: flex; justify-content: center; align-items: flex-end; height: 40px; padding: 0 5px 6px 0; }
.search-body label { line-height: 20px; }
.search-body input { width: 75px; height: 21px; padding: 3px 0 0 2px; border: 1px solid #ddd; border-top-color: #333; border-left-color: #333; background: #eee; }
.search-body button { align-self: flex-start; height: 28px; margin: 4px 0 0 3px; padding: 0 7px; border: 1px solid #ccc; border-right-color: #777; border-bottom-color: #777; background: #eee; }
.card:last-child { height: 76px; }

.right { flex: 1; min-width: 0; display: flex; flex-direction: column; }
.forums { width: 100%; margin-top: -13px; padding: 0 1px; border: 1px solid #c0c0c0; border-spacing: 0; }
.forums td { height: 44px; padding: 0 0 1px; border-bottom: 1px solid #c0c0c0; vertical-align: middle; }
.forums tr:last-child td { border-bottom: 0; }
.ico { width: 55px; }
.ico svg { width: 27px; height: 32px; margin-left: 12px; }
.num { width: 90px; text-align: center; }
.forums a { display: block; color: #111; font-weight: bold; line-height: 20px; }
.forums p { line-height: 19px; }
.forums .sub { padding-left: 10px; color: #222; line-height: 20px; }
.forums em { color: #e8a317; font-style: normal; }
.red { color: #e00; }

.online { margin-top: 8px; border: 1px solid #dedede; }
.online header { display: flex; align-items: center; justify-content: space-between; height: 32px; padding: 0 16px 0 11px; border-bottom: 1px solid #ececec; }
.online header svg { width: 8px; height: 6px; }
.online strong { color: #111; }
.row { display: flex; align-items: center; padding-left: 12px; gap: 17px; }
.birthday { height: 40px; border-bottom: 1px solid #ececec; }
.cake { width: 26px; height: 30px; }
.members { width: 28px; height: 24px; }
.who { align-items: flex-start; gap: 14px; padding-right: 6px; }
.who .members { margin-top: 8px; }
.lists { flex: 1; }
.lists ul { display: flex; height: 32px; align-items: center; padding: 4px 0 0 7px; }
.lists .roles { height: 33px; gap: 21px; border-bottom: 1px solid #ececec; }
.lists li { display: flex; align-items: center; gap: 2px; }
.lists li svg { width: 16px; height: 16px; }
.users li { width: 128px; color: #222; }
.c-red { color: #ee5a2c; }
.c-orange { color: #f2a544; }
.c-blue { color: #3bb0e4; }
.c-green { color: #9acb12; }

.legend { display: flex; justify-content: center; align-items: center; gap: 44px; width: 76%; height: 54px; margin: 10px auto 0; border: 1px solid #c0c0c0; }
.legend span { display: flex; align-items: center; gap: 9px; }
.legend svg { width: 27px; height: 32px; }

.foot { flex: none; display: flex; height: 61px; padding: 13px 10px 0 11px; border-top: 1px solid #c8c8c8; background: #f7f7f3; line-height: 18px; color: #555; }
.bubble { width: 23px; height: 27px; }
.powered { margin-left: 11px; }
.links { margin: -4px 0 0 auto; text-align: right; line-height: 19px; }
.links a { color: #111; }
.navy { color: #174a86; }
.amber { color: #f8a03a; }

.scroll { width: 18px; margin-right: 1px; display: flex; flex-direction: column; align-items: center; border-right: 1px solid #f2f1e8; background: #f6f5ee; }
.sb, .thumb { display: flex; align-items: center; justify-content: center; width: 16px; flex: none; border: 1px solid #98b4ea; border-radius: 2px; background: #c4d5fb; }
.sb { height: 16px; }
.sb svg { width: 8px; height: 6px; }
.up svg { transform: rotate(180deg); }
.space { flex: 68; }
.thumb { flex: 33; margin-bottom: 1px; }
.thumb svg { width: 8px; height: 8px; }

.status { position: relative; flex: none; display: flex; align-items: center; height: 23px; padding-left: 2px; border-top: 1px solid #fff; background: #ece9d8; }
.cell { display: flex; align-items: center; gap: 5px; width: 24px; height: 18px; padding-left: 3px; border-left: 1px solid #c8c5b2; }
.zone { width: 155px; padding-left: 5px; }
.langbar {
  position: absolute;
  left: 110px;
  bottom: 0;
  display: flex;
  align-items: center;
  gap: 11px;
  height: 26px;
  padding: 0 5px 0 3px;
  border-top: 2px solid #4b84ee;
  background: #2559d8;
  color: #fff;
}
.langbar .grip { height: 16px; margin-right: -4px; }
.ime { width: 15px; height: 15px; line-height: 13px; border: 1px solid #fff; border-radius: 2px; background: #e6ecfa; color: #0a1a90; text-align: center; }
.langbar button { gap: 3px; }
.langbar .q { justify-content: center; width: 13px; height: 14px; border: 1px solid #000; background: #fffbd0; color: #000; font-weight: bold; }
.lend { display: flex; flex-direction: column; align-items: center; gap: 6px; }
.lend i { width: 5px; height: 2px; background: #fff; }
.grip { flex: none; width: 4px; height: 22px; background: radial-gradient(circle at 1px 1px, #143a9c 1px, transparent 1px) 0 0 / 4px 4px; }

.taskbar {
  flex: none;
  display: flex;
  align-items: center;
  height: 34px;
  background: linear-gradient(#1c48b8, #3f86f0 8%, #245edb 25%, #245edb 85%, #1941a5);
  color: #fff;
}
.start {
  align-self: flex-end;
  width: 91px;
  height: 30px;
  margin-right: 9px;
  padding-left: 10px;
  border-radius: 0 8px 8px 0;
  background: linear-gradient(#6cb866, #3c9838 25%, #36923a 75%, #256e28);
  box-shadow: inset -2px 0 4px #1d5c20;
  font: italic 16px "Noto Sans CJK TC", sans-serif;
}
.quick { display: flex; align-items: center; gap: 7px; width: 161px; padding: 4px 0 0 9px; }
.quick span { margin: -12px 0 0 20px; font: 16px "Liberation Sans", sans-serif; }
.player { display: flex; align-items: center; justify-content: space-between; width: 171px; height: 26px; margin: 2px 16px 0 6px; padding: 0 2px 0 4px; border: 1px solid #555; background: linear-gradient(#3a3e48, #0a0c10 50%, #15181e); }
.ctl { display: flex; align-items: center; height: 20px; padding: 0 6px 0 10px; border: 1px solid #444b58; border-radius: 10px; }
.ctl i { width: 8px; height: 8px; margin-right: 7px; background: #fff; }
.ctl .i12 { margin: 0 3px 0 5px; height: 10px; }
.pn { width: 22px; height: 13px; }
.wc { width: 12px; height: 22px; }
.task { width: 159px; height: 25px; margin: 3px 0 0 2px; padding: 0 4px 0 10px; border-radius: 2px; background: linear-gradient(#5c98fa, #3c80f2 30%, #3a7cf0); }
.task span { flex: 1; text-align: left; }
.task.active { margin-left: 4px; background: #1c4fb8; box-shadow: inset 1px 1px 2px #0c2c78; }
.task.active b { color: #ffd9a0; }
.tray { display: flex; align-items: center; gap: 3px; align-self: stretch; margin-left: auto; padding: 2px 12px 0 11px; border-left: 1px solid #0a3a94; background: linear-gradient(#1060c8, #1c9ff0 10%, #129aee 85%, #0c70c8); }
.tray time { margin-left: 6px; white-space: nowrap; }
```
